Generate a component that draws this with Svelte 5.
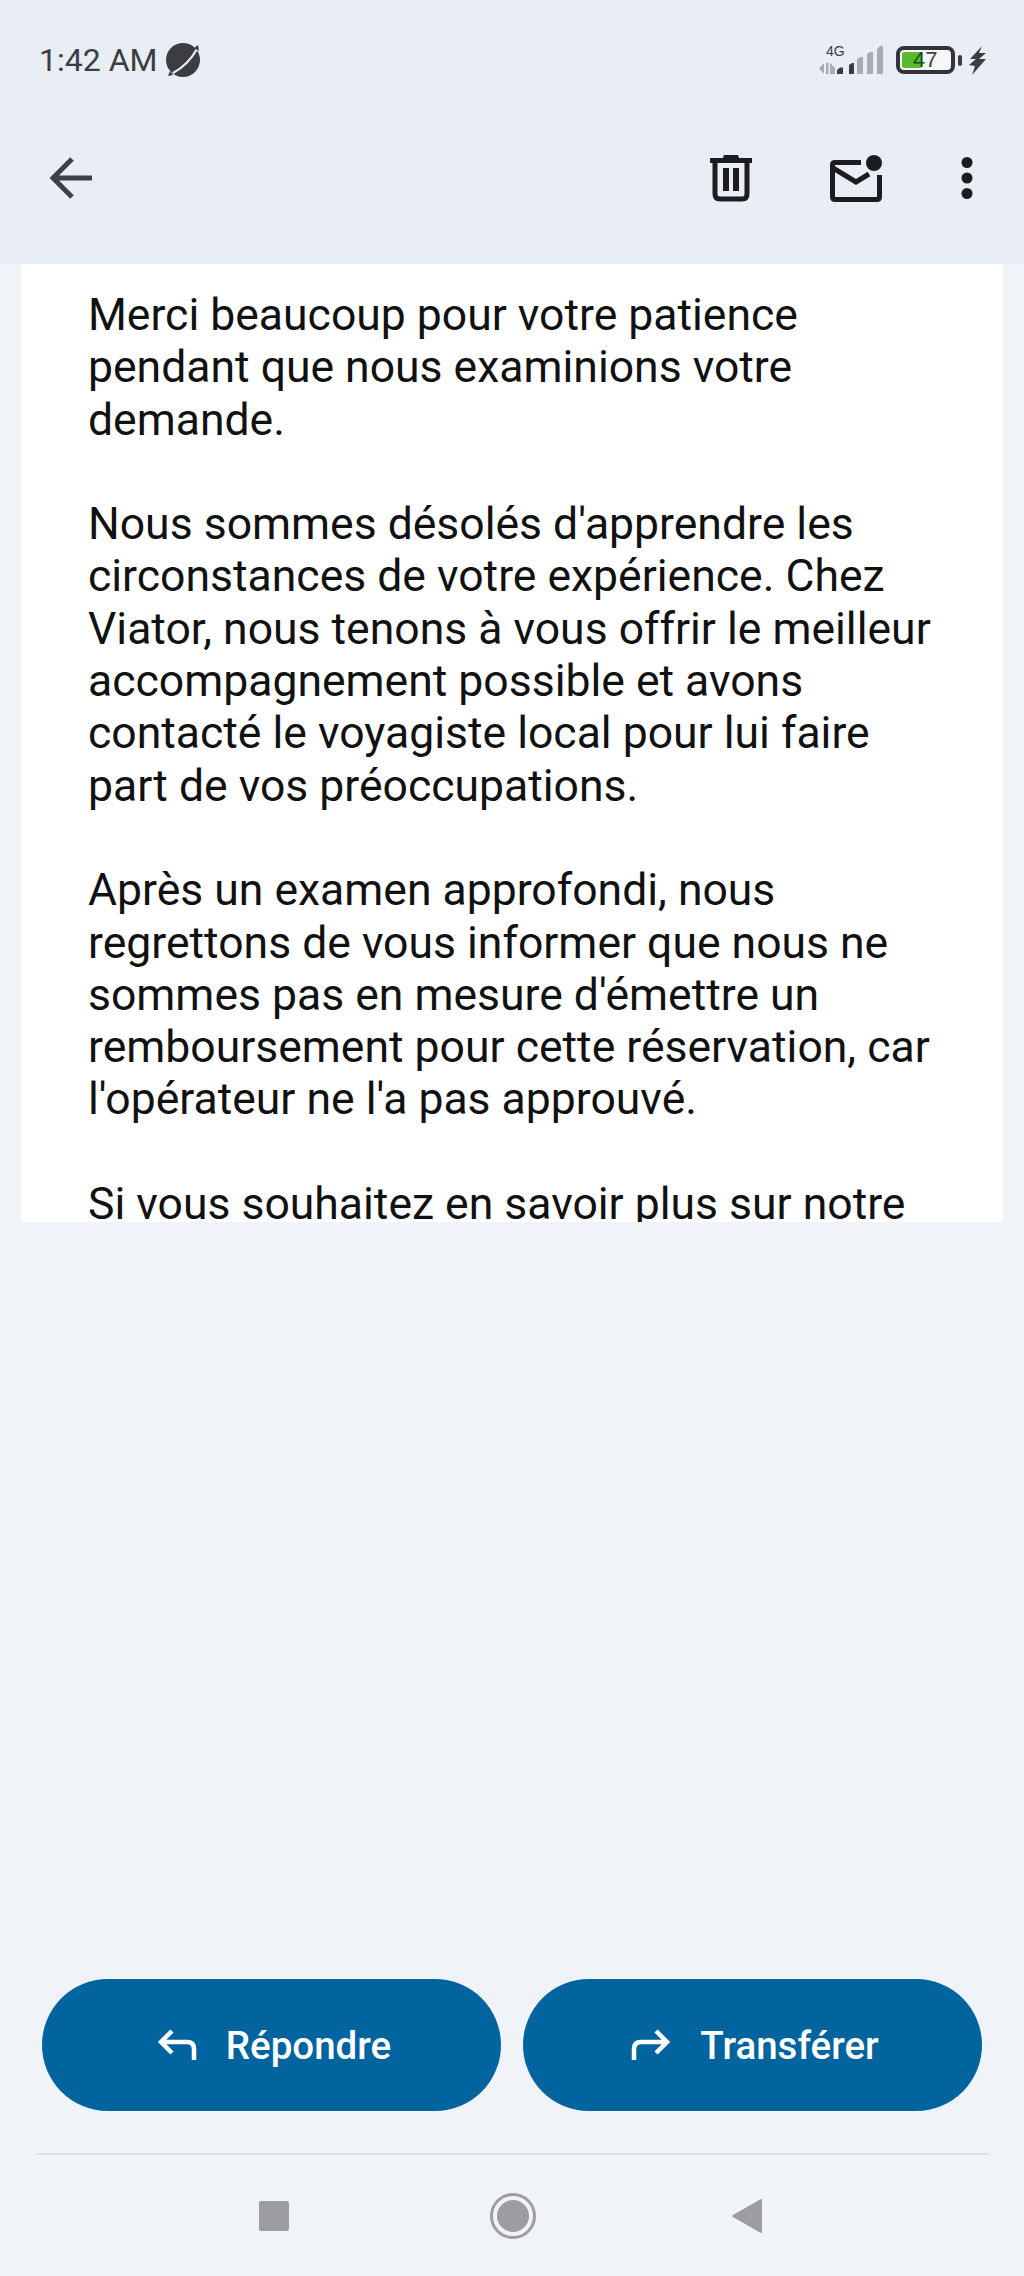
<script lang="ts">
	const paragraphs = [
		['Merci beaucoup pour votre patience', 'pendant que nous examinions votre', 'demande.'],
		[
			"Nous sommes désolés d'apprendre les",
			'circonstances de votre expérience. Chez',
			'Viator, nous tenons à vous offrir le meilleur',
			'accompagnement possible et avons',
			'contacté le voyagiste local pour lui faire',
			'part de vos préoccupations.'
		],
		[
			'Après un examen approfondi, nous',
			'regrettons de vous informer que nous ne',
			"sommes pas en mesure d'émettre un",
			'remboursement pour cette réservation, car',
			"l'opérateur ne l'a pas approuvé."
		],
		['Si vous souhaitez en savoir plus sur notre']
	];
</script>

<div class="page">
	<header class="top">
		<div class="status">
			<div class="clock">
				<span>1:42 AM</span>
				<svg width="36" height="36" viewBox="0 0 36 36">
					<circle cx="18" cy="18" r="17" fill="#3c3d40" />
					<path d="M8 31Q23 23 32 7" stroke="#e9edf6" stroke-width="2.2" fill="none" />
					<path d="M8 33L3 34L5 29z M33 3L34 9L29 6z" fill="#3c3d40" />
				</svg>
			</div>
			<div class="indicators">
				<svg class="signal" width="64" height="33" viewBox="0 -3 64 33">
					<text x="7" y="11" class="net">4G</text>
					<path d="M5 18v11l-5-5.500z M7 18h2.500v11h-2.500z M11 18l5 5v6h-5z" fill="#a9abb1" />
					<path d="M18 29v-4l3-2.500l3 0v6.500z M30 29v-9l3-2 2 0v11z" fill="#3c3d40" />
					<path d="M38 29v-15l3-2 3 0v17z M48 29v-20l3-2 3 0v22z M58 29v-25l3-3 3 0v28z" fill="#a9abb1" />
				</svg>
				<div class="battery">
					<div class="cell">
						<span class="fill"></span>
						<span class="level"><b>4</b>7</span>
					</div>
					<span class="cap"></span>
				</div>
				<svg class="bolt" width="17" height="29" viewBox="0 0 17 29">
					<path d="M13 0 L1 13 L7 13 L0 19 L6 20 L3 29 L17 13 L10 13 L17 7 L10 7z" fill="#3c3d40" />
				</svg>
			</div>
		</div>
		<div class="toolbar">
			<svg class="back" width="42" height="42" viewBox="0 0 42 42">
				<path d="M42 21H4 M22 2 L3 21 L22 40" fill="none" stroke="#3f4043" stroke-width="5" />
			</svg>
			<div class="actions">
				<svg class="trash" width="42" height="48" viewBox="0 0 42 48">
					<path d="M0 4h13l1-3h14l1 3h13v5h-42z" fill="#1d1d1f" />
					<path d="M5 7v33q0 5 5 5h22q5 0 5-5v-33" fill="none" stroke="#1d1d1f" stroke-width="5" />
					<path d="M13 14h6v23h-6z M23 14h6v23h-6z" fill="#1d1d1f" />
				</svg>
				<svg class="mail" width="52" height="47" viewBox="0 0 52 47">
					<path d="M31 7.500H5q-2.500 0-2.500 2.500v32q0 2.500 2.500 2.500h42q2.500 0 2.500-2.500v-22" fill="none" stroke="#1d1d1f" stroke-width="5" />
					<path d="M3 13l23 14 13-8" fill="none" stroke="#1d1d1f" stroke-width="5" />
					<circle cx="44" cy="8" r="8" fill="#1d1d1f" />
				</svg>
				<svg class="more" width="12" height="42" viewBox="0 0 12 42">
					<circle cx="6" cy="5.500" r="5.500" fill="#1d1d1f" />
					<circle cx="6" cy="21" r="5.500" fill="#1d1d1f" />
					<circle cx="6" cy="36.500" r="5.500" fill="#1d1d1f" />
				</svg>
			</div>
		</div>
	</header>

	<main class="card">
		{#each paragraphs as lines}
			<p>
				{#each lines as line}
					<span>{line}</span>
				{/each}
			</p>
		{/each}
	</main>

	<div class="buttons">
		<button>
			<svg width="40" height="32" viewBox="0 0 40 32">
				<path d="M15 2 L4 13 L15 24 M4 13H30q7 0 7 7v11" fill="none" stroke="#fff" stroke-width="4.500" />
			</svg>
			Répondre
		</button>
		<button>
			<svg width="40" height="32" viewBox="0 0 40 32">
				<path d="M25 2 L36 13 L25 24 M36 13H10q-7 0-7 7v11" fill="none" stroke="#fff" stroke-width="4.500" />
			</svg>
			Transférer
		</button>
	</div>

	<nav class="nav">
		<span class="square"></span>
		<span class="home"><span></span></span>
		<svg width="32" height="36" viewBox="0 0 32 36">
			<path d="M30 2 V34 L2 18z" fill="#9c9da2" stroke="#9c9da2" stroke-width="2" stroke-linejoin="round" />
		</svg>
	</nav>
</div>

<style>
	:global(body) {
		margin: 0;
	}

	.page {
		height: 2276px;
		display: flex;
		flex-direction: column;
		background: #f0f3f8;
		font-family: Roboto, sans-serif;
		overflow: hidden;
	}

	.top {
		height: 264px;
		flex: none;
		background: #e9edf6;
	}

	.status {
		height: 120px;
		padding: 0 38px 0 39px;
		display: flex;
		justify-content: space-between;
		align-items: center;
	}

	.clock {
		display: flex;
		align-items: center;
		gap: 8px;
		font-size: 32px;
		color: #3c3d40;
	}

	.indicators {
		display: flex;
		align-items: center;
	}

	.signal {
		margin: 0 13px 3px 0;
	}

	.net {
		font-family: 'Liberation Sans', sans-serif;
		font-size: 14px;
		fill: #3c3d40;
	}

	.battery {
		display: flex;
		align-items: center;
		gap: 2px;
		margin-right: 7px;
	}

	.cell {
		position: relative;
		box-sizing: border-box;
		width: 59px;
		height: 28px;
		border: 4px solid #333437;
		border-radius: 8px;
		background: #f4f6fa;
	}

	.fill {
		position: absolute;
		left: 2px;
		top: 2px;
		bottom: 2px;
		width: 20px;
		border-radius: 2px;
		background: #5cb82c;
	}

	.level {
		position: absolute;
		left: 13px;
		top: -2px;
		font-family: 'Liberation Sans', sans-serif;
		font-size: 22px;
		line-height: 24px;
		color: #3c3d40;
	}

	.level b {
		font-weight: 400;
		color: #14520f;
	}

	.cap {
		width: 4px;
		height: 11px;
		margin-left: 1px;
		border-radius: 2px;
		background: #3c3d40;
	}

	.toolbar {
		height: 116px;
		padding: 0 51px 0 50px;
		display: flex;
		justify-content: space-between;
		align-items: center;
	}

	.actions {
		display: flex;
		align-items: center;
	}

	.trash {
		margin-right: 78px;
	}

	.mail {
		margin-right: 79px;
	}

	.card {
		box-sizing: border-box;
		height: 958px;
		flex: none;
		margin: 0 21px;
		padding: 25px 20px 0 67px;
		background: #fff;
		overflow: hidden;
		font-size: 44.500px;
		line-height: 52.300px;
		color: #111;
	}

	p {
		margin: 0 0 52.300px;
	}

	p span {
		display: block;
		white-space: nowrap;
	}

	.buttons {
		margin-top: auto;
		padding: 0 42px;
		display: flex;
		gap: 22px;
	}

	button {
		flex: 1;
		height: 132px;
		padding: 0 0 0 5px;
		display: flex;
		align-items: center;
		justify-content: center;
		gap: 29px;
		border: 0;
		border-radius: 66px;
		background: #02649e;
		color: #fff;
		font-family: Roboto, sans-serif;
		font-size: 38.500px;
		font-weight: 500;
	}

	.nav {
		height: 123px;
		margin: 42px 35px 0 36px;
		padding-right: 4px;
		border-top: 2px solid #dfe1e6;
		display: flex;
		align-items: center;
		justify-content: center;
		box-sizing: border-box;
	}

	.square {
		width: 30px;
		height: 30px;
		margin-right: 201px;
		border-radius: 2px;
		background: #9c9da2;
	}

	.home {
		box-sizing: border-box;
		width: 46px;
		height: 46px;
		margin-right: 195px;
		padding: 4px;
		border: 3px solid #9c9da2;
		border-radius: 50%;
	}

	.home span {
		display: block;
		width: 100%;
		height: 100%;
		border-radius: 50%;
		background: #9c9da2;
	}
</style>
